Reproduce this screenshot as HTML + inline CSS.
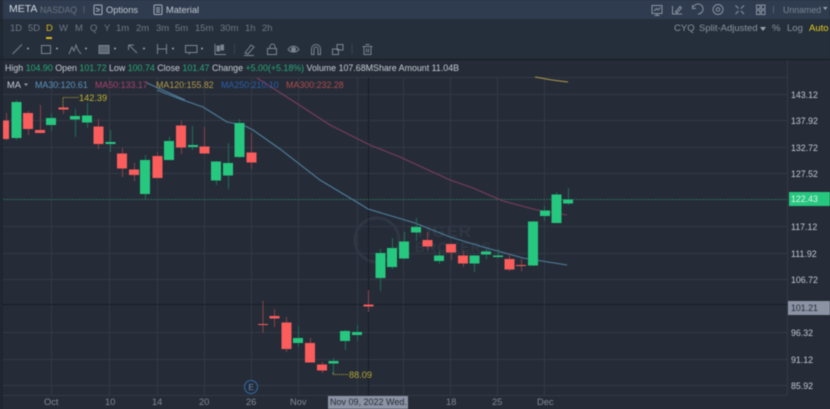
<!DOCTYPE html>
<html><head><meta charset="utf-8">
<style>
html,body{margin:0;padding:0;background:#252c38}
#r{position:relative;width:830px;height:409px;overflow:hidden;background:#252c38;font-family:"Liberation Sans",sans-serif;filter:blur(.45px)}
.b{position:absolute;left:0;width:830px}
.t{position:absolute;white-space:nowrap;font-size:10px;line-height:12px}
svg{position:absolute;left:0;top:0}
</style></head><body><div id="r">
<div class="b" style="top:0;height:19px;background:#2f3c4f"></div>
<div class="b" style="top:19px;height:40px;background:#252e3b"></div>
<div class="b" style="top:59px;height:1px;background:#141920"></div>
<svg width="830" height="409" viewBox="0 0 830 409">
<rect x="0" y="0" width="3" height="409" fill="#1e2530" opacity=".8"/>
<g stroke="#333a46" stroke-width="1" fill="none">
<path d="M3 77.500H787M3 94.500H787M3 120.500H787M3 147.500H787M3 173.500H787M3 226.500H787M3 253.500H787M3 279.500H787M3 332.500H787M3 359.500H787M3 385.500H787M3 395.500H787"/>
<path d="M51.500 77V395M109.500 77V395M157.500 77V395M204.500 77V395M251.500 77V395M298.500 77V395M357.500 77V395M403.500 77V395M450.500 77V395M497.500 77V395M544.500 77V395M787.500 60V395"/>
</g>
<g font-family="Liberation Sans,sans-serif" font-weight="700" fill="#2f3744">
<text x="415" y="237" font-size="17" letter-spacing="1">TIGER</text>
<text x="415" y="252" font-size="14" letter-spacing="1">BROKERS</text>
</g>
<circle cx="377" cy="240" r="22" fill="none" stroke="#2f3744" stroke-width="3"/>
<path d="M3 199.500H787" stroke="#2f6a58" stroke-width="1" stroke-dasharray="2 1"/>
<path d="M3 304.500H787" stroke="#11151b" stroke-width="1" stroke-dasharray="2 1"/>
<path d="M368.500 78V395" stroke="#11151b" stroke-width="1" stroke-dasharray="2 1"/>
<path d="M147 83L185 100M157 90L180 99L203 107L227 122L238 124L245 126L253 130L280 149L320 180L360 204L368 209L415 223L450 237L483 247L523 258L567 265" fill="none" stroke="#4f7f9c" stroke-width="1.100"/>
<path d="M257 78L290 99L330 125L370 145L400 157L450 180L473 188L503 201L537 210L567 215" fill="none" stroke="#7d3c5c" stroke-width="1.100"/>
<path d="M535 77L552 80L568 82" fill="none" stroke="#b09a4a" stroke-width="1.100"/>
<g stroke="#1f6e52" stroke-width="1">
<path d="M16.500 100V140M51.500 113V131M75.500 109V137M87.500 103V128M110.500 130V152M145.500 155V199M169.500 137V160M192.500 126V150M216.500 161V185M228.500 143V189M239.500 119V158M298.500 326V347M333.500 358V375M345.500 330V350M357.500 325V341M380.500 249V291M392.500 238V269M404.500 232V259M416.500 218V241M439.500 251V264M474.500 255V272M486.500 249V259M498.500 249V258M533.500 221V266M544.500 206V221M556.500 192V223M568.500 188V205"/>
</g>
<g stroke="#8a4048" stroke-width="1">
<path d="M6.500 113V140M28.500 111V135M40.500 105V133M63.500 107V114M98.500 119V149M122.500 148V177M134.500 163V181M157.500 152V178M181.500 121V154M204.500 127V154M251.500 133V169M263 301V333M274.500 309V327M286.500 317V352M310.500 338V362M322.500 362V373M368.500 290V312M427.500 232V250M451.500 244V260M463.500 251V267M509.500 254V271M521.500 259V271"/>
</g>
<g fill="#26c77f">
<rect x="11.500" y="102" width="10" height="36"/><rect x="46" y="118" width="10" height="7"/><rect x="70" y="116" width="10" height="3.500"/><rect x="82" y="115.500" width="10" height="7"/><rect x="105.500" y="142" width="10" height="2"/><rect x="140" y="160" width="10" height="34"/><rect x="164" y="141" width="10" height="19"/><rect x="188" y="145" width="10" height="2"/><rect x="211" y="161.500" width="10" height="19"/><rect x="223" y="163" width="10" height="12.500"/><rect x="234.500" y="123" width="10" height="34"/>
<rect x="293" y="338" width="10" height="5"/><rect x="328.500" y="361" width="10" height="2.500"/><rect x="340" y="331" width="10" height="10"/><rect x="352" y="332" width="10" height="3"/><rect x="375.500" y="253" width="10" height="25"/><rect x="387" y="248" width="10" height="19"/><rect x="399" y="241.500" width="10" height="17"/><rect x="411" y="227" width="10" height="5.500"/><rect x="434" y="255.500" width="10" height="5.500"/><rect x="469.500" y="255.500" width="10" height="8"/><rect x="481" y="251.500" width="10" height="3"/><rect x="493" y="255.500" width="10" height="1.500"/><rect x="528" y="221.500" width="10" height="44"/><rect x="540" y="210.500" width="10" height="5.500"/><rect x="551.500" y="194.500" width="10" height="28.500"/><rect x="563" y="199.500" width="10" height="4"/>
</g>
<g fill="#fb5c5c">
<rect x="3" y="120.500" width="6" height="18.500"/><rect x="23" y="113" width="10" height="16"/><rect x="35" y="130" width="10" height="3"/><rect x="58.500" y="107.500" width="10" height="2"/><rect x="93.500" y="126.500" width="10" height="17.500"/><rect x="117" y="153.500" width="10" height="15"/><rect x="129" y="169.500" width="10" height="5.500"/><rect x="152.500" y="156" width="10" height="22"/><rect x="176" y="125.500" width="10" height="22"/><rect x="199.500" y="146.500" width="10" height="7"/><rect x="246.500" y="152.500" width="10" height="10"/><rect x="258" y="324" width="10" height="1"/><rect x="269.500" y="316" width="10" height="2.500"/><rect x="281.500" y="322.500" width="10" height="26.500"/><rect x="305" y="343" width="10" height="19.500"/><rect x="317" y="364.500" width="10" height="6"/><rect x="363.500" y="304.500" width="10" height="2"/><rect x="422.500" y="240" width="10" height="6.500"/><rect x="446" y="244" width="10" height="8.500"/><rect x="458" y="255.500" width="10" height="8"/><rect x="504.500" y="259" width="10" height="10.500"/><rect x="516" y="265" width="10" height="1"/>
</g>
<path d="M63 107V97.500H79" fill="none" stroke="#b5a832" stroke-width="1" stroke-dasharray="1 1"/>
<path d="M333 372.500V374.500H349" fill="none" stroke="#b5a832" stroke-width="1" stroke-dasharray="1 1"/>
<circle cx="251" cy="387" r="6.500" fill="#252c38" stroke="#2f6ba8" stroke-width="1"/>
<text x="251" y="390" font-size="8" fill="#5d8fc4" text-anchor="middle" font-family="Liberation Sans,sans-serif">E</text>
<g fill="none" stroke="#7b8591" stroke-width="1">
<path d="M12.500 54L22 44.500"/><path d="M41.500 45.500H50.500V53.500H41.500Z"/>
<path d="M69 54L72 47L74 51L76 45L78 50L81 54"/>
<path d="M99 45.500H109V53.500H99Z" fill="#5d6672"/>
<path d="M129 45L137 53M128.500 45H134M128.500 45V50"/>
<path d="M157.500 44V54M166.500 44V54M157.500 49H166.500"/>
<path d="M185.500 45.500H197V52.500H185.500ZM190 52.500L189 54.500"/>
<path d="M215 44V54.500H226"/><rect x="217" y="46" width="2.500" height="5" fill="#7b8591"/><rect x="221" y="45" width="2.500" height="5" fill="#7b8591"/>
<path d="M245 53L251 45L254 47L248 54ZM244 55.500H254"/>
<rect x="267.500" y="48.500" width="9" height="6"/><path d="M270 48V46.500A2.500 2.500 0 0 1 275 46.500V48"/>
<path d="M288 49.500C291 45 296 45 299 49.500C296 53 291 53 288 49.500Z"/><circle cx="293.500" cy="49.500" r="2" fill="#7b8591"/>
<path d="M311.500 54.500V49A4.500 4.500 0 0 1 320.500 49V54.500H318V49A2 2 0 0 0 314 49V54.500Z"/>
<rect x="332.500" y="49" width="6" height="5.500"/><rect x="337" y="44.500" width="6" height="5.500"/>
<path d="M362.500 46.500H372.500M364 46.500V54.500H371V46.500M365.500 44.500H369.500"/><path d="M366.500 48.500V52.500M368.500 48.500V52.500"/>
<path d="M234.500 44V54M352 44V54" stroke="#38424e"/>
<g stroke="#8a95a3">
<path d="M652 5.500H662V13.500H652ZM654.500 15.500H659.500M657 13.500V15.500"/><path d="M654 11L656.500 8.500L658 10L660.500 7.500"/>
<path d="M672.500 6V14H682M675.500 12L680 6.500L681.500 8L677 13Z"/>
<path d="M698 14A5 5 0 1 0 693.500 7M692.500 5V8.500H696"/>
<circle cx="718" cy="9.500" r="5"/><circle cx="718" cy="9.500" r="1.800"/>
<path d="M735.500 5.500L738.500 8.500M744 5.500L741 8.500M735.500 14L738.500 11M744 14L741 11"/>
<rect x="756.500" y="5" width="3.500" height="4"/><rect x="761.500" y="5" width="3.500" height="4"/><rect x="756.500" y="10.500" width="3.500" height="4"/><rect x="761.500" y="10.500" width="3.500" height="4"/>
</g>
<path d="M773.500 6V13" stroke="#556070"/>
<path d="M84 6V13" stroke="#556070"/>
<g stroke="#a5afba"><rect x="94" y="5" width="8" height="9.500" rx="1"/><path d="M96 8L100 10M96 11H99"/><rect x="154" y="5" width="8" height="9.500" rx="1"/><path d="M156 8H160M156 10H160M156 12H160"/></g>
</g>
<g fill="#9aa5b1">
<circle cx="28" cy="48.500" r="1"/><circle cx="57" cy="48.500" r="1"/><circle cx="86" cy="48.500" r="1"/><circle cx="115" cy="48.500" r="1"/><circle cx="144" cy="48.500" r="1"/><circle cx="173" cy="48.500" r="1"/><circle cx="202" cy="48.500" r="1"/>
<path d="M24 83.500h4l-2 2.500z"/><path d="M823 7h4.500l-2.200 3z"/>
</g>
<rect x="46" y="37" width="6" height="2" fill="#d4b81e"/>
</svg>

<div class="t" style="left:9px;top:3px;font-size:10.500px;color:#d3d8de">META</div>
<div class="t" style="left:40px;top:4px;font-size:8.800px;color:#69747f">NASDAQ</div>
<div class="t" style="left:106px;top:4px;font-size:9.300px;color:#c2c9d1">Options</div>
<div class="t" style="left:166px;top:4px;font-size:9.300px;color:#c2c9d1">Material</div>
<div class="t" style="left:783px;top:4px;font-size:8.800px;color:#7a8695">Unnamed</div>

<div style="position:absolute;left:0;top:23px;font-size:9.500px;line-height:12px;color:#6f7a87">
<span class="t" style="font-size:9.500px;left:10px;top:0">1D</span><span class="t" style="font-size:9.500px;left:28px;top:0">5D</span><span class="t" style="font-size:9.500px;left:46px;top:0;color:#d4b81e">D</span><span class="t" style="font-size:9.500px;left:59px;top:0">W</span><span class="t" style="font-size:9.500px;left:75px;top:0">M</span><span class="t" style="font-size:9.500px;left:90px;top:0">Q</span><span class="t" style="font-size:9.500px;left:104px;top:0">Y</span><span class="t" style="font-size:9.500px;left:116px;top:0">1m</span><span class="t" style="font-size:9.500px;left:136px;top:0">2m</span><span class="t" style="font-size:9.500px;left:156px;top:0">3m</span><span class="t" style="font-size:9.500px;left:175px;top:0">5m</span><span class="t" style="font-size:9.500px;left:195px;top:0">15m</span><span class="t" style="font-size:9.500px;left:220px;top:0">30m</span><span class="t" style="font-size:9.500px;left:245px;top:0">1h</span><span class="t" style="font-size:9.500px;left:262px;top:0">2h</span>
</div>
<div class="t" style="left:674px;top:23px;font-size:9.500px;color:#8a95a3">CYQ</div>
<div class="t" style="left:699px;top:23px;font-size:9.500px;color:#8a95a3">Split-Adjusted</div>
<div style="position:absolute;left:760px;top:27px;width:0;height:0;border:3px solid transparent;border-top:4px solid #9aa5b1"></div>
<div class="t" style="left:772px;top:23px;font-size:9.500px;color:#8a95a3">%</div>
<div class="t" style="left:787px;top:23px;font-size:9.500px;color:#8a95a3">Log</div>
<div class="t" style="left:809px;top:23px;font-size:9.500px;color:#e6cf1c">Auto</div>

<div class="t" style="left:5px;top:62px;font-size:8.870px;color:#c8ced5">High <span style="color:#26a874">104.90</span> Open <span style="color:#26a874">101.72</span> Low <span style="color:#26a874">100.74</span> Close <span style="color:#26a874">101.47</span> Change <span style="color:#26a874">+5.00(+5.18%)</span> Volume 107.68MShare Amount 11.04B</div>

<div class="t" style="left:7px;top:79px;font-size:9.300px;color:#c8ced5">MA</div>
<div class="t" style="left:35px;top:79px;font-size:8.900px;color:#5b94bd">MA30:120.61</div>
<div class="t" style="left:95px;top:79px;font-size:8.900px;color:#a8416d">MA50:133.17</div>
<div class="t" style="left:156px;top:79px;font-size:8.900px;color:#b59a4a">MA120:155.82</div>
<div class="t" style="left:221px;top:79px;font-size:8.900px;color:#2a5ea8">MA250:210.10</div>
<div class="t" style="left:286px;top:79px;font-size:8.900px;color:#b14c4c">MA300:232.28</div>

<div class="t" style="left:79px;top:92px;font-size:9.200px;color:#c0b22c">142.39</div>
<div class="t" style="left:349px;top:369px;font-size:9.200px;color:#b5a832">88.09</div>

<div style="position:absolute;left:789px;top:192px;width:41px;height:14px;background:#26c77f"></div>
<div style="position:absolute;left:788px;top:301px;width:42px;height:14px;background:#8b93a4"></div>
<div>
<span class="t" style="font-size:8.800px;color:#c4cad1;left:791px;top:89px">143.12</span><span class="t" style="font-size:8.800px;color:#c4cad1;left:791px;top:115px">137.92</span><span class="t" style="font-size:8.800px;color:#c4cad1;left:791px;top:142px">132.72</span><span class="t" style="font-size:8.800px;color:#c4cad1;left:791px;top:168px">127.52</span><span class="t" style="font-size:8.800px;left:791px;top:193px;color:#d8f5e8">122.43</span><span class="t" style="font-size:8.800px;color:#c4cad1;left:791px;top:221px">117.12</span><span class="t" style="font-size:8.800px;color:#c4cad1;left:791px;top:248px">111.92</span><span class="t" style="font-size:8.800px;color:#c4cad1;left:791px;top:274px">106.72</span><span class="t" style="font-size:8.800px;left:791px;top:302px;color:#262b35">101.21</span><span class="t" style="font-size:8.800px;color:#c4cad1;left:791px;top:327px">96.32</span><span class="t" style="font-size:8.800px;color:#c4cad1;left:791px;top:354px">91.12</span><span class="t" style="font-size:8.800px;color:#c4cad1;left:791px;top:380px">85.92</span>
</div>

<div>
<span class="t" style="font-size:9.300px;color:#7f8995;left:44px;top:396px">Oct</span><span class="t" style="font-size:9.300px;color:#7f8995;left:105px;top:396px">10</span><span class="t" style="font-size:9.300px;color:#7f8995;left:152px;top:396px">14</span><span class="t" style="font-size:9.300px;color:#7f8995;left:199px;top:396px">20</span><span class="t" style="font-size:9.300px;color:#7f8995;left:246px;top:396px">26</span><span class="t" style="font-size:9.300px;color:#7f8995;left:290px;top:396px">Nov</span><span class="t" style="font-size:9.300px;color:#7f8995;left:446px;top:396px">18</span><span class="t" style="font-size:9.300px;color:#7f8995;left:492px;top:396px">25</span><span class="t" style="font-size:9.300px;color:#7f8995;left:537px;top:396px">Dec</span>
</div>
<div class="t" style="left:328px;top:396px;width:80px;height:13px;background:#8b93a4;color:#252b35;font-size:9px;line-height:13px;padding-left:2px;box-sizing:border-box">Nov 09, 2022 Wed.</div>
</div></body></html>
